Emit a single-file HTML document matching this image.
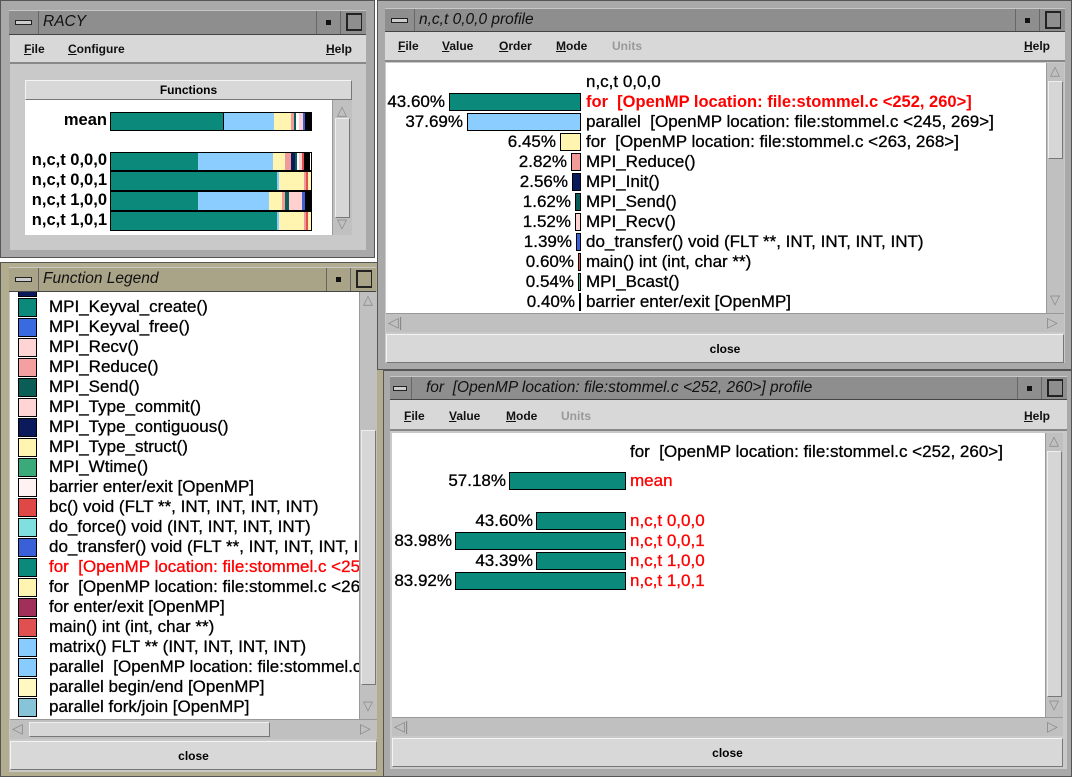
<!DOCTYPE html>
<html><head><meta charset="utf-8"><style>
*{box-sizing:border-box;margin:0;padding:0}
body{width:1072px;height:777px;background:#fff;position:relative;overflow:hidden;font-family:"Liberation Sans",sans-serif}
.a{position:absolute}
.frame{position:absolute;background:#a9a9a9;border:1px solid #555}
.frame.act{background:#b3ad90}
.title{position:absolute;background:#8e8e8e;border-top:1px solid #c8c8c8;border-bottom:1px solid #444;font-style:italic;font-size:15.5px;color:#111}
.act .title{background:#a9a387}
.title .t{position:absolute;left:34px;top:2px;white-space:nowrap}
.title .mn{position:absolute;left:0;top:0;width:30px;height:100%;border-right:1px solid #666}
.title .mn i{position:absolute;left:6px;top:9px;width:17px;height:5px;border:1px solid #222;background:#ccc}
.title .b1{position:absolute;right:26px;top:0;width:24px;height:100%;border-left:1px solid #666}
.title .b1 i{position:absolute;left:9px;top:9px;width:5px;height:5px;background:#111}
.title .b2{position:absolute;right:0;top:0;width:26px;height:100%;border-left:1px solid #666}
.title .b2 i{position:absolute;left:5px;top:2px;width:16px;height:18px;border:2px solid #222;border-right-width:1px}
.menu{position:absolute;background:#d8d8d8;border-bottom:2px solid #888;font-size:12px;font-weight:bold;color:#111}
.menu span{position:absolute;top:7px}
.menu u{text-decoration:underline}
.body{position:absolute;background:#c9c9c9}
.white{position:absolute;background:#fff;overflow:hidden}
.vs{position:absolute;background:#c0c0c0;border-left:1px solid #999}
.hs{position:absolute;background:#c0c0c0;border-top:1px solid #999}
.btn{position:absolute;background:#d8d8d8;border:1px solid #f4f4f4;border-right-color:#777;border-bottom-color:#777;font-size:12px;font-weight:bold;text-align:center}
.row{position:absolute;font-size:17px;white-space:nowrap;color:#000;line-height:20px;-webkit-text-stroke:0.3px currentColor}
.bar{position:absolute;height:18px;border:1px solid #000}
.sw{position:absolute;left:8px;width:19px;height:19px;border:1px solid #000}
.red{color:#f00}
.thumbv{position:absolute;background:#d6d6d6;border:1px solid #eee;border-right-color:#777;border-bottom-color:#777}
</style></head><body>

<!-- RACY window -->
<div class="frame" style="left:0;top:0;width:375px;height:258px">
 <div class="title" style="left:8px;top:9px;width:357px;height:25px"><div class="mn"><i></i></div><span class="t">RACY</span><div class="b1"><i></i></div><div class="b2"><i></i></div></div>
 <div class="body" style="left:9px;top:34px;width:356px;height:215px"></div>
 <div class="menu" style="left:9px;top:34px;width:356px;height:29px"><span style="left:14px"><u>F</u>ile</span><span style="left:58px"><u>C</u>onfigure</span><span style="left:316px"><u>H</u>elp</span></div>
 <div class="btn" style="left:24px;top:79px;width:327px;height:20px;padding-top:2px">Functions</div>
 <div class="white" style="left:24px;top:99px;width:327px;height:135px">
  <div class="row" style="right:245px;top:10px;font-size:16.5px;font-weight:bold;-webkit-text-stroke:0">mean</div>
  <div class="row" style="right:245px;top:50px;font-size:16.5px;font-weight:bold;-webkit-text-stroke:0">n,c,t 0,0,0</div>
  <div class="row" style="right:245px;top:70px;font-size:16.5px;font-weight:bold;-webkit-text-stroke:0">n,c,t 0,0,1</div>
  <div class="row" style="right:245px;top:90px;font-size:16.5px;font-weight:bold;-webkit-text-stroke:0">n,c,t 1,0,0</div>
  <div class="row" style="right:245px;top:110px;font-size:16.5px;font-weight:bold;-webkit-text-stroke:0">n,c,t 1,0,1</div>
  <div class="a" style="left:85px;top:12px;width:202px;height:19px;border:1px solid #000;display:flex"><i style="width:113px;background:#0b8a7c;border-right:1px solid #000"></i><i style="width:50px;background:#8ccdff"></i><i style="width:17px;background:#fff4b0"></i><i style="width:3px;background:#f09a9a"></i><i style="width:2px;background:#0a5e55"></i><i style="width:3px;background:#fff"></i><i style="width:4px;background:#ffd0d0"></i><i style="width:2px;background:#3a60d8"></i><i style="width:6px;background:#000"></i></div>
  <div class="a" style="left:85px;top:52px;width:202px;height:19px;border:1px solid #000;display:flex"><i style="width:87px;background:#0b8a7c"></i><i style="width:75px;background:#8ccdff"></i><i style="width:12px;background:#fff4b0"></i><i style="width:6px;background:#f09a9a"></i><i style="width:4px;background:#0a1a5a"></i><i style="width:2px;background:#0a5e55"></i><i style="width:2px;background:#fff"></i><i style="width:3px;background:#ffd0d0"></i><i style="width:2px;background:#e05050"></i><i style="width:6px;background:#000"></i></div>
  <div class="a" style="left:85px;top:71px;width:202px;height:20px;border:1px solid #000;display:flex"><i style="width:168px;background:#0b8a7c"></i><i style="width:2px;background:#8ccdff"></i><i style="width:25px;background:#fff4b0"></i><i style="width:2px;background:#f09a9a"></i><i style="width:2px;background:#e05050"></i><i style="width:3px;background:#fff4b0"></i></div>
  <div class="a" style="left:85px;top:91px;width:202px;height:20px;border:1px solid #000;display:flex"><i style="width:87px;background:#0b8a7c"></i><i style="width:71px;background:#8ccdff"></i><i style="width:13px;background:#fff4b0"></i><i style="width:3px;background:#f09a9a"></i><i style="width:4px;background:#0a5e55"></i><i style="width:13px;background:#ffd0d0"></i><i style="width:3px;background:#3a60d8"></i><i style="width:6px;background:#000"></i></div>
  <div class="a" style="left:85px;top:111px;width:202px;height:20px;border:1px solid #000;display:flex"><i style="width:168px;background:#0b8a7c"></i><i style="width:2px;background:#8ccdff"></i><i style="width:25px;background:#fff4b0"></i><i style="width:2px;background:#f09a9a"></i><i style="width:2px;background:#e05050"></i><i style="width:3px;background:#fff4b0"></i></div>
  <div class="vs" style="left:307px;top:0;width:20px;height:135px"><div class="thumbv" style="left:2px;top:18px;width:15px;height:100px"></div><div class="a" style="left:4px;top:3px;font-size:13px;color:#888">△</div><div class="a" style="left:4px;top:116px;font-size:13px;color:#888">▽</div></div>
 </div>
</div>

<!-- Function Legend -->
<div class="frame act" style="left:0;top:262px;width:384px;height:515px">
 <div class="title" style="left:8px;top:4px;width:367px;height:25px"><div class="mn"><i></i></div><span class="t">Function Legend</span><div class="b1"><i></i></div><div class="b2"><i></i></div></div>
 <div class="body" style="left:8px;top:29px;width:367px;height:480px"></div>
 <div class="white" style="left:9px;top:29px;width:349px;height:427px">
  <div class="sw" style="top:-14px;background:#0a1a5a"></div>
  <div id="leg"></div>
 </div>
 <div class="vs" style="left:358px;top:29px;width:18px;height:427px"><div class="thumbv" style="left:1px;top:138px;width:15px;height:255px"></div><div class="a" style="left:3px;top:0;font-size:13px;color:#888">△</div><div class="a" style="left:3px;top:406px;font-size:13px;color:#888">▽</div></div>
 <div class="hs" style="left:9px;top:456px;width:367px;height:20px"><div class="thumbv" style="left:19px;top:2px;width:241px;height:15px"></div><div class="a" style="left:2px;top:0;font-size:14px;color:#888">◁</div><div class="a" style="left:350px;top:0;font-size:14px;color:#888">▷</div></div>
 <div class="btn" style="left:9px;top:478px;width:367px;height:29px;padding-top:7px">close</div>
</div>

<!-- n,c,t 0,0,0 profile -->
<div class="frame" style="left:377px;top:0;width:695px;height:370px">
 <div class="title" style="left:7px;top:7px;width:680px;height:24px"><div class="mn"><i></i></div><span class="t">n,c,t 0,0,0 profile</span><div class="b1"><i></i></div><div class="b2"><i></i></div></div>
 <div class="body" style="left:7px;top:31px;width:680px;height:331px"></div>
 <div class="menu" style="left:7px;top:31px;width:680px;height:30px"><span style="left:13px"><u>F</u>ile</span><span style="left:57px"><u>V</u>alue</span><span style="left:114px"><u>O</u>rder</span><span style="left:171px"><u>M</u>ode</span><span style="left:227px;color:#999">Units</span><span style="left:639px"><u>H</u>elp</span></div>
 <div class="white" style="left:8px;top:62px;width:660px;height:250px" id="p1"></div>
 <div class="vs" style="left:668px;top:62px;width:18px;height:250px"><div class="thumbv" style="left:1px;top:18px;width:15px;height:78px"></div><div class="a" style="left:3px;top:0;font-size:13px;color:#888">△</div><div class="a" style="left:3px;top:229px;font-size:13px;color:#888">▽</div></div>
 <div class="hs" style="left:8px;top:312px;width:678px;height:19px"><div class="a" style="left:2px;top:0;font-size:14px;color:#888">◁|</div><div class="a" style="left:661px;top:0;font-size:14px;color:#888">▷</div></div>
 <div class="btn" style="left:8px;top:333px;width:678px;height:29px;padding-top:7px">close</div>
</div>

<!-- for profile -->
<div class="frame" style="left:383px;top:370px;width:689px;height:407px">
 <div class="title" style="left:6px;top:5px;width:677px;height:24px"><div class="mn" style="width:22px"><i style="left:3px;width:14px"></i></div><span class="t" style="left:36px">for&nbsp; [OpenMP location: file:stommel.c &lt;252, 260&gt;] profile</span><div class="b1"><i></i></div><div class="b2"><i></i></div></div>
 <div class="body" style="left:6px;top:29px;width:677px;height:369px"></div>
 <div class="menu" style="left:6px;top:29px;width:677px;height:31px"><span style="left:14px;top:9px"><u>F</u>ile</span><span style="left:59px;top:9px"><u>V</u>alue</span><span style="left:116px;top:9px"><u>M</u>ode</span><span style="left:171px;top:9px;color:#999">Units</span><span style="left:634px;top:9px"><u>H</u>elp</span></div>
 <div class="white" style="left:8px;top:62px;width:653px;height:284px" id="p2"></div>
 <div class="vs" style="left:661px;top:62px;width:18px;height:284px"><div class="thumbv" style="left:1px;top:18px;width:15px;height:246px"></div><div class="a" style="left:3px;top:0;font-size:13px;color:#888">△</div><div class="a" style="left:3px;top:264px;font-size:13px;color:#888">▽</div></div>
 <div class="hs" style="left:8px;top:346px;width:671px;height:19px"><div class="a" style="left:2px;top:0;font-size:14px;color:#888">◁|</div><div class="a" style="left:655px;top:0;font-size:14px;color:#888">▷</div></div>
 <div class="btn" style="left:8px;top:367px;width:671px;height:29px;padding-top:7px">close</div>
</div>

<script>
var L=[["MPI_Keyval_create()","#0b8a7c"],["MPI_Keyval_free()","#3a6ae0"],["MPI_Recv()","#ffd4d4"],["MPI_Reduce()","#f4a0a0"],["MPI_Send()","#0a5e55"],["MPI_Type_commit()","#ffd4d4"],["MPI_Type_contiguous()","#0a1a5a"],["MPI_Type_struct()","#fff4b0"],["MPI_Wtime()","#3aaa7a"],["barrier enter/exit [OpenMP]","#fff2f2"],["bc() void (FLT **, INT, INT, INT, INT)","#e04848"],["do_force() void (INT, INT, INT, INT)","#80e0e0"],["do_transfer() void (FLT **, INT, INT, INT, INT)","#3a60d8"],["for&nbsp; [OpenMP location: file:stommel.c &lt;252, 260&gt;]","#0b8a7c",1],["for&nbsp; [OpenMP location: file:stommel.c &lt;263, 268&gt;]","#fff4b0"],["for enter/exit [OpenMP]","#a0305a"],["main() int (int, char **)","#e05050"],["matrix() FLT ** (INT, INT, INT, INT)","#88ccff"],["parallel&nbsp; [OpenMP location: file:stommel.c &lt;245, 269&gt;]","#88ccff"],["parallel begin/end [OpenMP]","#fff8c0"],["parallel fork/join [OpenMP]","#88c4d8"]];
var h="";L.forEach(function(e,i){var y=6+i*20;h+='<div class="sw" style="top:'+y+'px;background:'+e[1]+'"></div><div class="row'+(e[2]?' red':'')+'" style="left:39px;top:'+(y-1)+'px">'+e[0]+'</div>';});
document.getElementById("leg").outerHTML=h;
var P=[["43.60%",131,"#0b8a7c","for&nbsp; [OpenMP location: file:stommel.c &lt;252, 260&gt;]",1],["37.69%",113,"#8ccdff","parallel&nbsp; [OpenMP location: file:stommel.c &lt;245, 269&gt;]"],["6.45%",20,"#fff4b0","for&nbsp; [OpenMP location: file:stommel.c &lt;263, 268&gt;]"],["2.82%",9,"#f09a9a","MPI_Reduce()"],["2.56%",8,"#0a1a5a","MPI_Init()"],["1.62%",5,"#0a5e55","MPI_Send()"],["1.52%",5,"#ffd0d0","MPI_Recv()"],["1.39%",4,"#3a60d8","do_transfer() void (FLT **, INT, INT, INT, INT)"],["0.60%",2,"#e05050","main() int (int, char **)"],["0.54%",2,"#3aaa7a","MPI_Bcast()"],["0.40%",1,"#fff","barrier enter/exit [OpenMP]"]];
h='<div class="row" style="left:200px;top:9px">n,c,t 0,0,0</div>';
P.forEach(function(e,i){var y=30+i*20,bx=194-e[1];h+='<div class="bar" style="left:'+bx+'px;top:'+y+'px;width:'+(e[1]+1)+'px;background:'+e[2]+'"></div><div class="row" style="right:'+(660-bx+4)+'px;top:'+(y-1)+'px">'+e[0]+'</div><div class="row'+(e[4]?' red':'')+'" style="left:200px;top:'+(y-1)+'px;'+(e[4]?'font-weight:bold;font-size:16.5px;-webkit-text-stroke:0':'')+'">'+e[3]+'</div>';});
document.getElementById("p1").innerHTML=h;
var Q=[["57.18%",116,"mean",40],["43.60%",89,"n,c,t 0,0,0",80],["83.98%",170,"n,c,t 0,0,1",100],["43.39%",89,"n,c,t 1,0,0",120],["83.92%",170,"n,c,t 1,0,1",140]];
h='<div class="row" style="left:238px;top:9px">for&nbsp; [OpenMP location: file:stommel.c &lt;252, 260&gt;]</div>';
Q.forEach(function(e){var y=e[3]-1,bx=233-e[1];h+='<div class="bar" style="left:'+bx+'px;top:'+y+'px;width:'+(e[1]+1)+'px;background:#0b8a7c"></div><div class="row" style="right:'+(653-bx+3)+'px;top:'+(y-1)+'px">'+e[0]+'</div><div class="row red" style="left:238px;top:'+(y-1)+'px">'+e[2]+'</div>';});
document.getElementById("p2").innerHTML=h;
</script>
</body></html>
